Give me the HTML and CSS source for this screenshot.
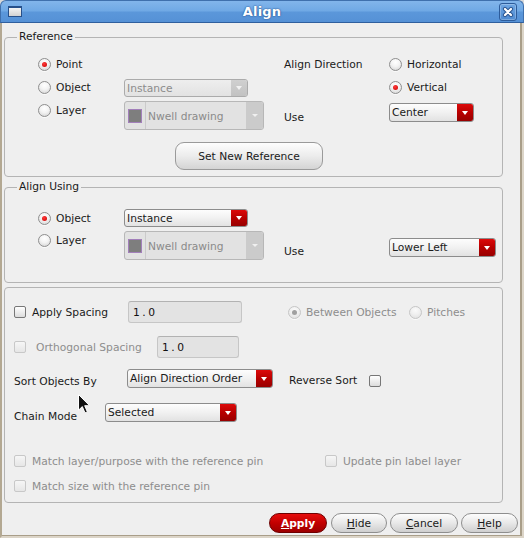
FILE: index.html
```html
<!DOCTYPE html>
<html>
<head>
<meta charset="utf-8">
<title>Align</title>
<link rel="stylesheet" href="styles.css">
</head>
<body>
<div class="window">
  <div class="titlebar">
    <div class="tb-side tb-left"><span class="win-icon"></span></div>
    <div class="title">Align</div>
    <div class="tb-side tb-right">
      <span class="close-btn">
        <svg width="12" height="12" viewBox="0 0 12 12"><path d="M3 3 L9 9 M9 3 L3 9" stroke="#2b5590" stroke-width="4.2" stroke-linecap="round"/><path d="M3 3 L9 9 M9 3 L3 9" stroke="#ffffff" stroke-width="2.2" stroke-linecap="round"/></svg>
      </span>
    </div>
  </div>

  <div class="frame-body">
    <fieldset class="group group-ref">
      <legend>Reference</legend>
      <div class="grid grid-ref">
        <div class="radio checked g-r1 g-c1"><span class="radio-mark"></span><span>Point</span></div>
        <div class="radio g-r2 g-c1"><span class="radio-mark"></span><span>Object</span></div>
        <div class="radio g-r3 g-c1 top"><span class="radio-mark"></span><span>Layer</span></div>

        <div class="combo disabled w124 h18 g-r2 g-c2 bottom"><span class="combo-val">Instance</span><span class="combo-arrow"></span></div>
        <div class="layer-combo g-r3 g-c2"><span class="layer-swatch-cell"><span class="swatch"></span></span><span class="layer-text">Nwell drawing</span><span class="layer-arrow"></span></div>

        <div class="label g-r1 g-c3">Align Direction</div>
        <div class="label g-r3 g-c3 top use-ref">Use</div>

        <div class="radio g-r1 g-c4"><span class="radio-mark"></span><span>Horizontal</span></div>
        <div class="radio checked g-r2 g-c4"><span class="radio-mark"></span><span>Vertical</span></div>
        <div class="combo w85 h19 g-r3 g-c4 top center-combo"><span class="combo-val">Center</span><span class="combo-arrow"></span></div>

        <div class="btn-big g-r4">Set New Reference</div>
      </div>
    </fieldset>

    <fieldset class="group group-using">
      <legend>Align Using</legend>
      <div class="grid grid-using">
        <div class="radio checked g-r1 g-c1"><span class="radio-mark"></span><span>Object</span></div>
        <div class="radio g-r2 g-c1 top"><span class="radio-mark"></span><span>Layer</span></div>

        <div class="combo w124 h18 g-r1 g-c2 top"><span class="combo-val">Instance</span><span class="combo-arrow"></span></div>
        <div class="layer-combo g-r2 g-c2"><span class="layer-swatch-cell"><span class="swatch"></span></span><span class="layer-text">Nwell drawing</span><span class="layer-arrow"></span></div>

        <div class="label g-r2 g-c3 top use-using">Use</div>
        <div class="combo w107 h19 g-r2 g-c4 top lower-combo"><span class="combo-val">Lower Left</span><span class="combo-arrow"></span></div>
      </div>
    </fieldset>

    <fieldset class="group group-spacing">
      <div class="row row-a">
        <div class="check w114"><span class="check-mark"></span><span>Apply Spacing</span></div>
        <div class="entry w114">1.0</div>
        <div class="radio disabled checked between"><span class="radio-mark"></span><span>Between Objects</span></div>
        <div class="radio disabled"><span class="radio-mark"></span><span>Pitches</span></div>
      </div>
      <div class="row row-b">
        <div class="check disabled wide-gap w143"><span class="check-mark"></span><span>Orthogonal Spacing</span></div>
        <div class="entry w82">1.0</div>
      </div>
      <div class="row row-c">
        <div class="label sort-label">Sort Objects By</div>
        <div class="combo w146 h19 sort-combo"><span class="combo-val">Align Direction Order</span><span class="combo-arrow"></span></div>
        <div class="label reverse-label">Reverse Sort</div>
        <span class="check-mark reverse-check"></span>
      </div>
      <div class="row row-d">
        <div class="label chain-label">Chain Mode</div>
        <div class="combo w132 h19"><span class="combo-val">Selected</span><span class="combo-arrow"></span></div>
      </div>
      <div class="row row-e">
        <div class="check disabled w311"><span class="check-mark"></span><span>Match layer/purpose with the reference pin</span></div>
        <div class="check disabled"><span class="check-mark"></span><span>Update pin label layer</span></div>
      </div>
      <div class="row row-f">
        <div class="check disabled"><span class="check-mark"></span><span>Match size with the reference pin</span></div>
      </div>
    </fieldset>

    <div class="actions">
      <div class="btn btn-apply w58"><span><u>A</u>pply</span></div>
      <div class="btn w56"><span><u>H</u>ide</span></div>
      <div class="btn w68"><span><u>C</u>ancel</span></div>
      <div class="btn w57"><span><u>H</u>elp</span></div>
    </div>
  </div>

  <svg class="cursor" width="13" height="20" viewBox="0 0 13 20"><path d="M0.5 0.5 L0.5 16.2 L4.3 12.6 L7 18.9 L9.4 17.9 L6.7 11.7 L11.6 11.7 Z" fill="#111" stroke="#fff" stroke-width="1" stroke-linejoin="round"/></svg>
</div>
</body>
</html>
```

FILE: styles.css
```css
* { box-sizing: border-box; }
html, body { margin: 0; padding: 0; }
body {
  background: #efefef;
  font-family: "DejaVu Sans", "Liberation Sans", sans-serif;
  font-size: 10.7px;
  line-height: 13px;
  color: #1a1a1a;
}

.window {
  position: relative;
  width: 524px;
  height: 538px;
  overflow: hidden;
  background: #d9d9d9;
}

/* ---------- title bar ---------- */
.titlebar {
  height: 23px;
  display: flex;
  align-items: center;
  border: 1px solid #3f70ad;
  border-bottom-color: #2f5f9e;
  border-radius: 6px 6px 0 0;
  background: linear-gradient(#82b5eb 0%, #70a9e5 46%, #5b97da 54%, #5591d6 100%);
}
.tb-side { width: 40px; height: 100%; display: flex; align-items: center; }
.tb-left { padding-left: 7px; }
.tb-right { justify-content: flex-end; padding-right: 6px; }
.win-icon {
  width: 14px;
  height: 11px;
  border: 1px solid #27508a;
  border-top-width: 2px;
  background: linear-gradient(#f4f4f4, #d2d2d2);
}
.title {
  flex: 1;
  text-align: center;
  color: #fff;
  font-weight: bold;
  font-size: 13px;
  letter-spacing: 0.2px;
  text-shadow: 0 0 2px #2a5896, 0 0 1px #2a5896;
}
.close-btn {
  width: 18px;
  height: 18px;
  border: 1px solid #2d5c9b;
  border-radius: 3px;
  background: linear-gradient(#6ea6e3, #4f8bd1);
  box-shadow: inset 0 0 0 1px rgba(255, 255, 255, 0.25);
  display: flex;
  align-items: center;
  justify-content: center;
}

/* ---------- body frame ---------- */
.frame-body {
  height: 515px;
  background: #efefef;
  border-left: 2px solid #b3a892;
  border-right: 2px solid #dcd5c8;
  border-bottom: 2px solid #dcd5c8;
  box-shadow: inset -2px -1px 0 #a99e89;
  padding-top: 7px;
}

.group {
  margin: 0 0 0 2px;
  width: 499px;
  border: 1px solid #b4b4b4;
  border-radius: 4px;
  padding: 0;
  min-width: 0;
}
.group legend {
  margin-left: 12px;
  padding: 0 2px;
  line-height: 14px;
}
.group-using { margin-top: 3px; }
.group-spacing { margin-top: 4px; padding: 0 0 9px 9px; }

.grid {
  display: grid;
  grid-template-columns: 86px 160px 105px 1fr;
  padding-left: 33px;
}
.grid-ref {
  grid-template-rows: 19px 19px 29px 36px;
  row-gap: 4px;
  padding-top: 11px;
  padding-bottom: 6px;
}
.grid-using {
  grid-template-rows: 19px 29px;
  row-gap: 3px;
  padding-top: 15px;
  padding-bottom: 22px;
}
.g-r1 { grid-row: 1; }
.g-r2 { grid-row: 2; }
.g-r3 { grid-row: 3; }
.g-r4 { grid-row: 4; }
.g-c1 { grid-column: 1; }
.g-c2 { grid-column: 2; }
.g-c3 { grid-column: 3; }
.g-c4 { grid-column: 4; }
.top { align-self: start; }
.bottom { align-self: end; }

.label { display: flex; align-items: center; white-space: nowrap; }
.use-ref { margin-top: 10px; }
.use-using { margin-top: 14px; }
.center-combo { margin-top: 2px; }
.lower-combo { margin-top: 7px; }

/* ---------- radios ---------- */
.radio {
  display: flex;
  align-items: center;
  gap: 5px;
  height: 19px;
  white-space: nowrap;
}
.radio-mark {
  width: 13px;
  height: 13px;
  flex: none;
  border-radius: 50%;
  border: 1px solid #8e8e8e;
  background: radial-gradient(circle at 50% 30%, #ffffff 0%, #f3f3f3 45%, #cfcfcf 100%);
  box-shadow: 0 1px 0 rgba(255, 255, 255, 0.7);
  display: flex;
  align-items: center;
  justify-content: center;
}
.checked .radio-mark::after {
  content: "";
  width: 5px;
  height: 5px;
  border-radius: 50%;
  background: radial-gradient(circle at 40% 35%, #ff3a3a, #c80000);
}
.radio.disabled { color: #8d8d8d; }
.radio.disabled .radio-mark {
  border-color: #c6c6c6;
  background: radial-gradient(circle at 50% 30%, #fafafa 0%, #f0f0f0 45%, #dcdcdc 100%);
}
.radio.disabled.checked .radio-mark::after { background: #a0a0a0; }
.between { margin-left: 46px; width: 121px; }

/* ---------- checkboxes ---------- */
.check {
  display: flex;
  align-items: center;
  gap: 6px;
  white-space: nowrap;
}
.check.wide-gap { gap: 10px; }
.check-mark {
  width: 12px;
  height: 12px;
  flex: none;
  border: 1px solid #777;
  border-radius: 2px;
  background: linear-gradient(#ffffff, #dcdcdc);
}
.check.disabled { color: #8d8d8d; }
.check.disabled .check-mark {
  border-color: #c8c8c8;
  background: linear-gradient(#f6f6f6, #e6e6e6);
}

/* ---------- combos ---------- */
.combo {
  display: flex;
  border: 1px solid #8c8c8c;
  border-radius: 3px;
  background: linear-gradient(#fdfdfd, #f1f1f1 50%, #e2e2e2);
  overflow: hidden;
  white-space: nowrap;
}
.combo-val {
  flex: 1;
  padding-left: 2px;
  display: flex;
  align-items: center;
  overflow: hidden;
}
.combo-arrow {
  width: 16px;
  flex: none;
  background: linear-gradient(#dc0a0a, #b80000 50%, #980000);
  display: flex;
  align-items: center;
  justify-content: center;
}
.combo-arrow::after {
  content: "";
  border-left: 3.5px solid transparent;
  border-right: 3.5px solid transparent;
  border-top: 4px solid #fff;
}
.combo.disabled {
  border-color: #ababab;
  background: linear-gradient(#eeeeee, #e2e2e2);
  color: #8c8c8c;
}
.combo.disabled .combo-arrow { background: linear-gradient(#d0d0d0, #c2c2c2); }
.combo.disabled .combo-arrow::after { border-top-color: #f2f2f2; }

.h18 { height: 18px; }
.h19 { height: 19px; }
.w82 { width: 82px; }
.w85 { width: 85px; }
.w107 { width: 107px; }
.w114 { width: 114px; }
.w124 { width: 124px; }
.w132 { width: 132px; }
.w143 { width: 143px; }
.w146 { width: 146px; }
.w311 { width: 311px; }
.w56 { width: 56px; }
.w57 { width: 57px; }
.w58 { width: 58px; }
.w68 { width: 68px; }

/* ---------- layer combo ---------- */
.layer-combo {
  display: flex;
  width: 140px;
  height: 29px;
  border: 1px solid #b7b7b7;
  border-radius: 3px;
  background: #e2e2e2;
  color: #8a8a8a;
  overflow: hidden;
  white-space: nowrap;
}
.layer-swatch-cell {
  width: 21px;
  flex: none;
  display: flex;
  align-items: center;
  justify-content: center;
  border-right: 1px solid #cbcbcb;
}
.swatch {
  width: 14px;
  height: 14px;
  border: 1px solid #a27fba;
  background: #7e7e7e;
}
.layer-text {
  flex: 1;
  padding-left: 2px;
  padding-top: 1px;
  display: flex;
  align-items: center;
}
.layer-arrow {
  width: 17px;
  flex: none;
  background: #cbcbcb;
  display: flex;
  align-items: center;
  justify-content: center;
}
.layer-arrow::after {
  content: "";
  border-left: 3px solid transparent;
  border-right: 3px solid transparent;
  border-top: 3px solid #f0f0f0;
}

/* ---------- entries ---------- */
.entry {
  height: 22px;
  border: 1px solid #c6c6c6;
  border-top-color: #b2b2b2;
  border-radius: 3px;
  background: #e3e3e3;
  padding-left: 4px;
  display: flex;
  align-items: center;
  letter-spacing: 2.5px;
  color: #111;
}

/* ---------- spacing group rows ---------- */
.row { display: flex; }
.row-a { height: 22px; margin-top: 13px; align-items: center; }
.row-b { height: 22px; margin-top: 13px; align-items: center; }
.row-c { height: 20px; margin-top: 10px; align-items: flex-start; }
.row-d { height: 20px; margin-top: 15px; align-items: flex-start; }
.row-e { height: 14px; margin-top: 31px; align-items: center; }
.row-f { height: 14px; margin-top: 11px; align-items: center; }
.sort-label { width: 113px; margin-top: 7px; }
.sort-combo { margin-top: 1px; }
.reverse-label { width: 80px; margin-left: 16px; margin-top: 6px; }
.reverse-check { margin-top: 7px; }
.chain-label { width: 91px; margin-top: 7px; }

/* ---------- buttons ---------- */
.btn-big {
  grid-column: 2 / 4;
  align-self: end;
  margin-left: 51px;
  width: 148px;
  height: 28px;
  border: 1px solid #9a9a9a;
  border-radius: 9px;
  background: linear-gradient(#fdfdfd, #ececec 50%, #d4d4d4);
  display: flex;
  align-items: center;
  justify-content: center;
  white-space: nowrap;
}
.actions {
  display: flex;
  justify-content: flex-end;
  gap: 3px;
  margin-top: 10px;
  padding-right: 4px;
  height: 20px;
}
.btn {
  height: 20px;
  border: 1px solid #8e8e8e;
  border-radius: 10px;
  background: linear-gradient(#fdfdfd, #e8e8e8 50%, #cfcfcf);
  display: flex;
  align-items: center;
  justify-content: center;
}
.btn-apply {
  margin-right: 1px;
  background: linear-gradient(#e60c0c, #c20000 50%, #9c0000);
  border-color: #6e0000;
  color: #fff;
  font-weight: bold;
}

.cursor {
  position: absolute;
  left: 78px;
  top: 394px;
}
```
